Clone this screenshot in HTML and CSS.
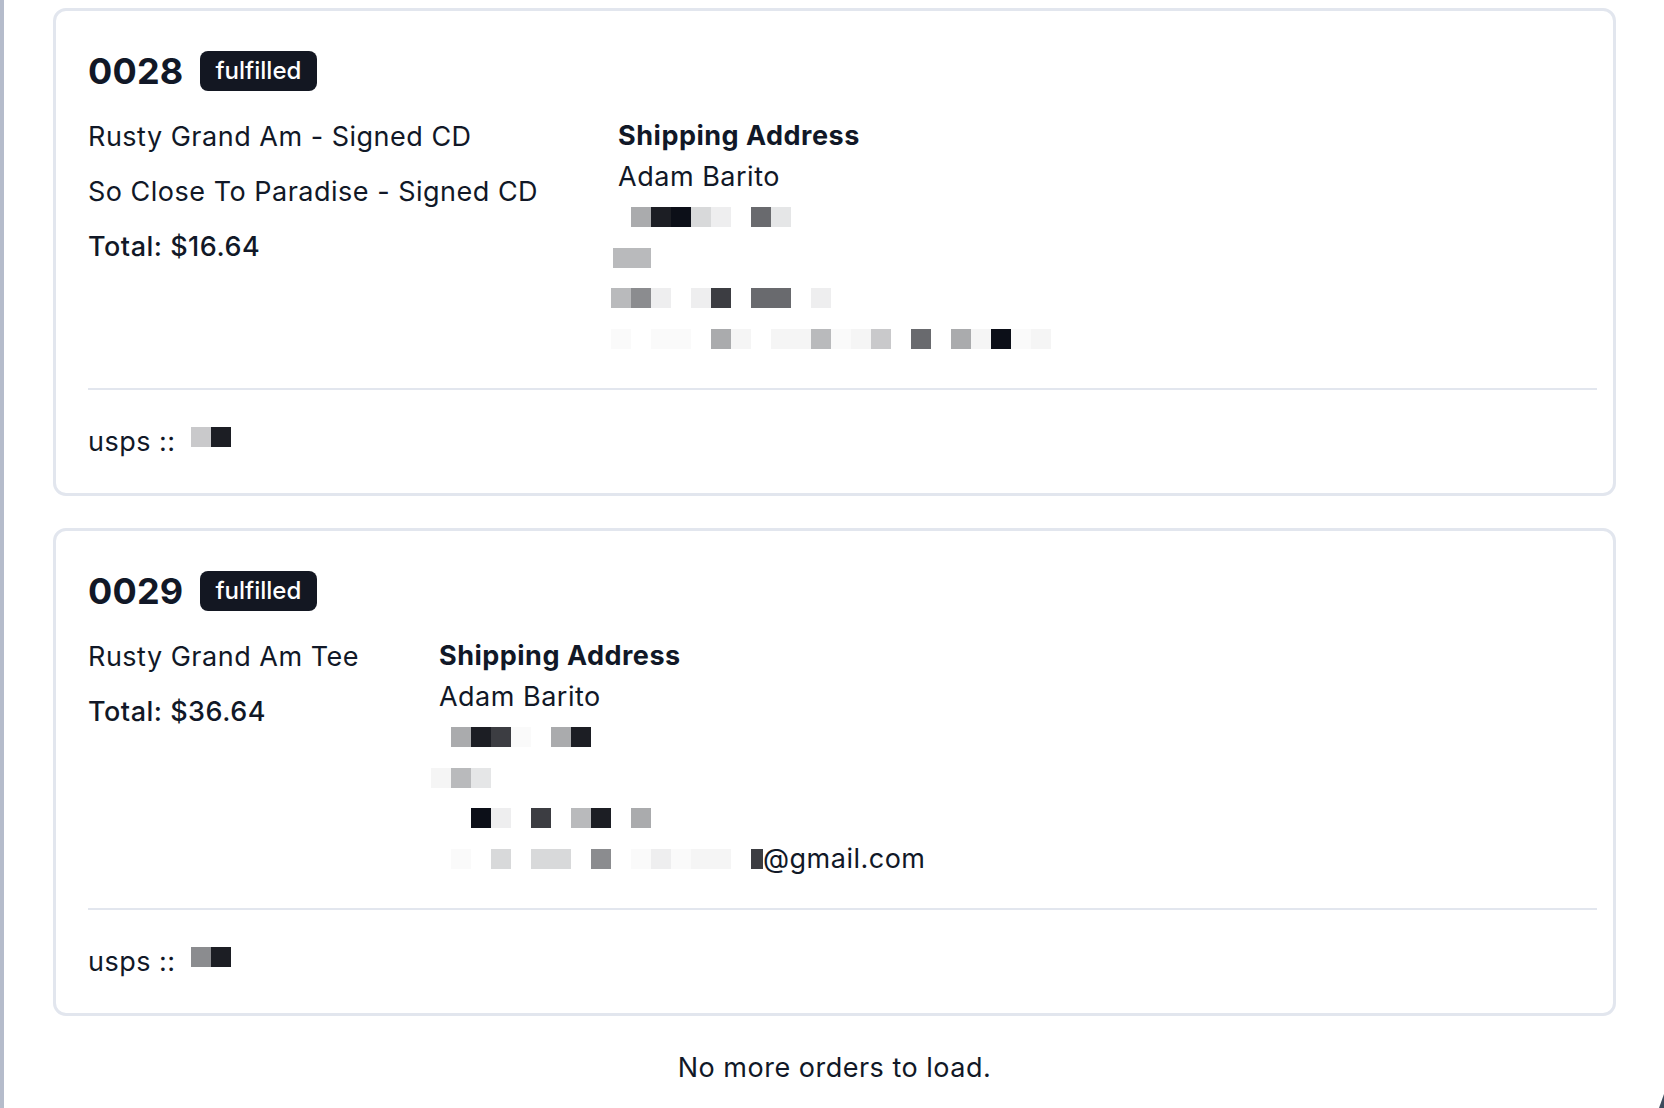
FILE: index.html
```html
<!DOCTYPE html>
<html lang="en">
<head>
<meta charset="utf-8">
<title>Orders</title>
<link rel="stylesheet" href="styles.css">
</head>
<body>
<div class="page">
  <main class="orders">
    <article class="card">
      <header class="order-head">
        <h2 class="order-num">0028</h2>
        <span class="badge">fulfilled</span>
      </header>
      <div class="order-main">
        <div class="items">
          <p class="item">Rusty Grand Am - Signed CD</p>
          <p class="item">So Close To Paradise - Signed CD</p>
          <p class="item total">Total: $16.64</p>
        </div>
        <div class="address">
          <p class="addr-title">Shipping Address</p>
          <p class="addr-line">Adam Barito</p>
          <div class="mosaic"><span class="px"></span><span class="px k7"></span><span class="px k11"></span><span class="px k12"></span><span class="px k4"></span><span class="px k2"></span><span class="px"></span><span class="px k9"></span><span class="px k3"></span></div>
          <div class="mosaic"><span class="px k6 narrow"></span><span class="px k6"></span></div>
          <div class="mosaic"><span class="px k6"></span><span class="px k8"></span><span class="px k2"></span><span class="px"></span><span class="px k2"></span><span class="px k10"></span><span class="px"></span><span class="px k9"></span><span class="px k9"></span><span class="px"></span><span class="px k2"></span></div>
          <div class="mosaic"><span class="px k0"></span><span class="px"></span><span class="px k0"></span><span class="px k0"></span><span class="px"></span><span class="px k7"></span><span class="px k1"></span><span class="px"></span><span class="px k1"></span><span class="px k1"></span><span class="px k6"></span><span class="px k0"></span><span class="px k1"></span><span class="px k5"></span><span class="px"></span><span class="px k9"></span><span class="px"></span><span class="px k7"></span><span class="px k1"></span><span class="px k12"></span><span class="px k0"></span><span class="px k1"></span></div>
        </div>
      </div>
      <hr class="divider">
      <p class="tracking">usps ::<span class="track-code"><span class="px k5"></span><span class="px k11"></span></span></p>
    </article>

    <article class="card">
      <header class="order-head">
        <h2 class="order-num">0029</h2>
        <span class="badge">fulfilled</span>
      </header>
      <div class="order-main">
        <div class="items">
          <p class="item">Rusty Grand Am Tee</p>
          <p class="item total">Total: $36.64</p>
        </div>
        <div class="address">
          <p class="addr-title">Shipping Address</p>
          <p class="addr-line">Adam Barito</p>
          <div class="mosaic shift"><span class="px"></span><span class="px k7"></span><span class="px k11"></span><span class="px k10"></span><span class="px k0"></span><span class="px"></span><span class="px k7"></span><span class="px k11"></span></div>
          <div class="mosaic shift"><span class="px k1"></span><span class="px k6"></span><span class="px k3"></span></div>
          <div class="mosaic shift"><span class="px"></span><span class="px"></span><span class="px k12"></span><span class="px k2"></span><span class="px"></span><span class="px k10"></span><span class="px"></span><span class="px k6"></span><span class="px k11"></span><span class="px"></span><span class="px k7"></span></div>
          <div class="mosaic shift"><span class="px"></span><span class="px k0"></span><span class="px"></span><span class="px k4"></span><span class="px"></span><span class="px k4"></span><span class="px k4"></span><span class="px"></span><span class="px k8"></span><span class="px"></span><span class="px k0"></span><span class="px k2"></span><span class="px k0"></span><span class="px k1"></span><span class="px k1"></span><span class="px"></span><span class="px k10 sliver"></span><span class="mail">@gmail.com</span></div>
        </div>
      </div>
      <hr class="divider">
      <p class="tracking">usps ::<span class="track-code"><span class="px k8"></span><span class="px k11"></span></span></p>
    </article>
  </main>
  <p class="end-note">No more orders to load.</p>
</div>
</body>
</html>
```

FILE: styles.css
```css
html, body {
  margin: 0;
  padding: 0;
  background: #ffffff;
}

body {
  font-family: "Inter", "Liberation Sans", sans-serif;
  color: #111827;
}

.page {
  min-height: 1108px;
  box-sizing: border-box;
  border-left: 4px solid #b5bccb;
  padding: 8px 48px 0 49px;
}

.page::after {
  content: "";
  position: fixed;
  right: 0;
  bottom: 0;
  width: 5px;
  height: 14px;
  background: #3e4c5e;
  clip-path: polygon(100% 0, 100% 100%, 0 100%);
}

.orders {
  display: flex;
  flex-direction: column;
  gap: 32px;
}

.card {
  border: 3px solid #e2e6ee;
  border-radius: 13px;
  padding: 36px 16px 30.5px 32px;
  background: #ffffff;
}

.order-head {
  display: flex;
  align-items: center;
  gap: 17px;
  height: 48px;
  margin-bottom: 21px;
}

.order-num {
  margin: 0;
  font-size: 36px;
  line-height: 48px;
  font-weight: 700;
  letter-spacing: 0.2px;
}

.badge {
  background: #131722;
  color: #ffffff;
  font-size: 24px;
  font-weight: 500;
  line-height: 36px;
  padding: 2px 16px 2px 15px;
  border-radius: 8px;
}

.order-main {
  display: flex;
  align-items: flex-start;
  gap: 80px;
}

.items {
  display: flex;
  flex-direction: column;
  gap: 13px;
}

.item {
  margin: 0;
  font-size: 27px;
  line-height: 42px;
  letter-spacing: 0.5px;
  white-space: nowrap;
}

.total {
  font-weight: 500;
}

.address {
  font-size: 27px;
  line-height: 40.5px;
  letter-spacing: 0.5px;
}

.addr-title {
  margin: 0;
  font-weight: 700;
}

.addr-line {
  margin: 0;
}

.mosaic {
  display: flex;
  align-items: center;
  height: 40.5px;
  margin-left: -7px;
}

.mosaic.shift {
  margin-left: -8px;
}

.px {
  display: inline-block;
  flex: none;
  width: 20px;
  height: 20px;
}

.px.narrow {
  width: 18px;
  margin-left: 2px;
}

.px.sliver {
  width: 12px;
}

.mail {
  white-space: nowrap;
}

.k0 { background: #fafafa; }
.k1 { background: #f5f5f5; }
.k2 { background: #eeeeef; }
.k3 { background: #e5e6e7; }
.k4 { background: #d8d9da; }
.k5 { background: #c9c9cb; }
.k6 { background: #b9babc; }
.k7 { background: #aaabad; }
.k8 { background: #8b8c8f; }
.k9 { background: #696a6e; }
.k10 { background: #3c3d42; }
.k11 { background: #1c1e24; }
.k12 { background: #0c0f18; }

.divider {
  border: 0;
  height: 2px;
  background: #e2e6ee;
  margin: 29px 0 0 0;
}

.tracking {
  margin: 32px 0 0 0;
  font-size: 27px;
  line-height: 40.5px;
  letter-spacing: 0.5px;
}

.track-code {
  display: inline-flex;
  vertical-align: 4px;
  margin-left: 15px;
}

.end-note {
  margin: 32px 0 0 0;
  text-align: center;
  font-size: 27px;
  line-height: 40.5px;
  letter-spacing: 0.5px;
  width: 1563px;
}
```
